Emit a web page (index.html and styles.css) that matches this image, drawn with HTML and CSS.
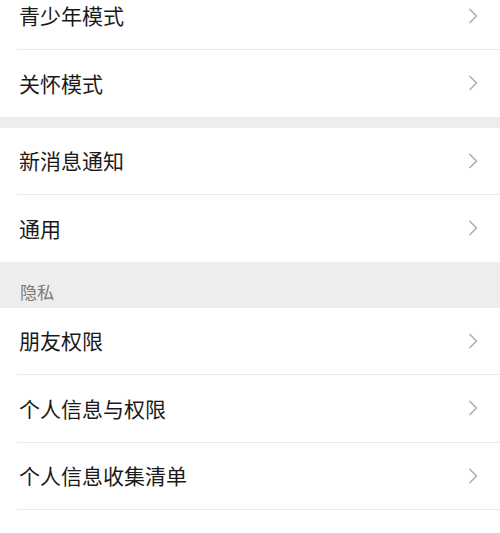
FILE: index.html
```html
<!DOCTYPE html>
<html lang="zh-CN">
<head>
<meta charset="utf-8">
<link rel="stylesheet" href="styles.css">
</head>
<body>
<div class="page">
  <div class="group first">
    <div class="row"><span class="label">青少年模式</span><svg class="chev" viewBox="0 0 10 16"><polyline points="1.5,1 8.5,8 1.5,15"/></svg></div>
    <div class="row"><span class="label">关怀模式</span><svg class="chev" viewBox="0 0 10 16"><polyline points="1.5,1 8.5,8 1.5,15"/></svg></div>
  </div>
  <div class="gap"></div>
  <div class="group">
    <div class="row"><span class="label">新消息通知</span><svg class="chev" viewBox="0 0 10 16"><polyline points="1.5,1 8.5,8 1.5,15"/></svg></div>
    <div class="row"><span class="label">通用</span><svg class="chev" viewBox="0 0 10 16"><polyline points="1.5,1 8.5,8 1.5,15"/></svg></div>
  </div>
  <div class="section-title">隐私</div>
  <div class="group">
    <div class="row"><span class="label">朋友权限</span><svg class="chev" viewBox="0 0 10 16"><polyline points="1.5,1 8.5,8 1.5,15"/></svg></div>
    <div class="row"><span class="label">个人信息与权限</span><svg class="chev" viewBox="0 0 10 16"><polyline points="1.5,1 8.5,8 1.5,15"/></svg></div>
    <div class="row"><span class="label">个人信息收集清单</span><svg class="chev" viewBox="0 0 10 16"><polyline points="1.5,1 8.5,8 1.5,15"/></svg></div>
    <div class="row"><span class="label">第三方信息共享清单</span><svg class="chev" viewBox="0 0 10 16"><polyline points="1.5,1 8.5,8 1.5,15"/></svg></div>
  </div>
</div>
</body>
</html>
```
FILE: styles.css
```css
html, body {
  margin: 0;
  padding: 0;
  background: #ffffff;
}
body {
  width: 500px;
  height: 533px;
  overflow: hidden;
  font-family: "Noto Sans CJK SC", "Noto Sans", sans-serif;
}
.page {
  margin-top: -17.5px;
}
.group {
  background: #ffffff;
}
.row {
  height: 66.5px;
  display: flex;
  align-items: center;
  justify-content: space-between;
  margin-left: 17px;
  padding: 0 22px 0 2px;
  border-bottom: 1px solid #ebebeb;
}
.group .row:last-child {
  border-bottom: none;
}
.label {
  font-size: 21px;
  color: #1a1a1a;
  line-height: 1;
}
.chev {
  width: 10px;
  height: 16px;
  fill: none;
  stroke: #adadad;
  stroke-width: 1.5;
}
.gap {
  height: 11px;
  background: #ededed;
}
.section-title {
  height: 46px;
  background: #ededed;
  box-sizing: border-box;
  padding: 19px 0 0 20px;
  font-size: 17px;
  line-height: 22px;
  color: #7a7a7a;
}
```
